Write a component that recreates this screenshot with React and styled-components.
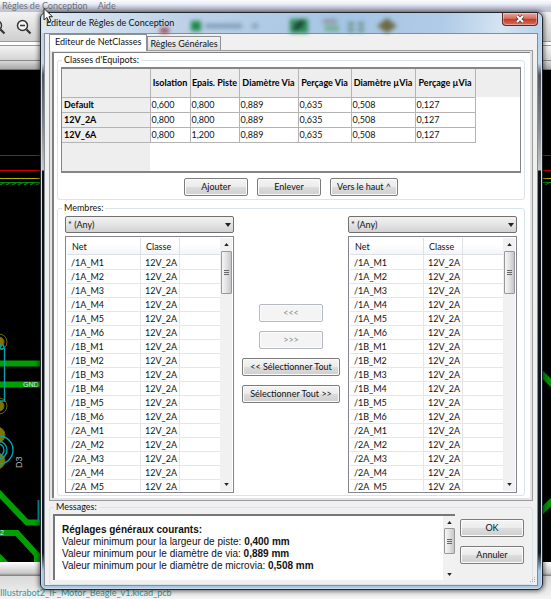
import React from "react";
import styled, { createGlobalStyle, css } from "styled-components";

const UI = `Lato, "Open Sans", sans-serif`;

const GlobalStyle = createGlobalStyle`
  * { box-sizing: border-box; }
  html, body { margin: 0; padding: 0; }
  body { font: 9px/12px ${UI}; color: #111; background: #000; }
  button, select { font: inherit; color: inherit; margin: 0; }
`;

/* ---------- application behind the dialog ---------- */

const Desktop = styled.div`
  position: relative;
  height: 100vh;
  min-height: 480px;
  display: flex;
  flex-direction: column;
  overflow: hidden;
`;

const MenuBar = styled.nav`
  flex: 0 0 12px;
  display: flex;
  gap: 10px;
  padding: 0 2px;
  line-height: 11px;
  color: #6d6f78;
  background: linear-gradient(#fafbfe 0, #eceff7 30%, #c9cde0 60%, #bfc2cc 100%);
`;

const MenuItem = styled.a`
  color: inherit;
  text-decoration: none;
`;

const ToolBar = styled.div`
  flex: 0 0 30px;
  display: flex;
  align-items: center;
  gap: 8px;
  background: linear-gradient(#f2f2f2, #cfcfcf);
  border-bottom: 1px solid #999;

  svg:first-child { margin-left: -11px; }
`;

const RulerBand = styled.div`
  flex: 0 0 28px;
  background: linear-gradient(#fff 0 3px, #999 3px 4px, #f4f4f4 4px, #d4d4d4 18px, #888 18px 19px, #d9d9d9 19px, #a8a8a8 27px, #444 28px);
`;

const Board = styled.div`
  flex: 1;
  min-height: 0;
  display: flex;
  justify-content: space-between;
  background: #000;
  overflow: hidden;

  svg { flex: none; }
`;

const StatusBand = styled.div`
  flex: 0 0 14px;
  background: linear-gradient(#fff, #c8c8c8 80%, #777);
`;

const StatusBar = styled.div`
  flex: 0 0 19px;
  padding-top: 11px;
  color: #2a9aa0;
  background: linear-gradient(#d8d8d8, #f4f4f4);
`;

const Zoom = () => (
  <svg width="18" height="18" viewBox="0 0 18 18" fill="none" stroke="#333" strokeWidth="1.5">
    <circle cx="7.5" cy="7.5" r="5" fill="#f4f4f4" />
    <path d="M5 7.5h5" />
    <path d="M11.5 11.5l4 4" strokeWidth="2.2" />
  </svg>
);

const TracksLeft = () => (
  <svg width="44" height="496" viewBox="0 0 44 496">
    <g strokeWidth="1.2">
      <path d="M0 85.5H44M0 100.5H44" stroke="#d00000" />
      <path d="M0 108.5H44" stroke="#b5b000" />
      <path d="M0 112.5H44" stroke="#0a8a0a" />
      <path d="M0 115l4-2m2 2l4-2m2 2l4-2m2 2l4-2m2 2l4-2m2 2l4-2m2 2l4-2" stroke="#0a8a0a" />
    </g>
    <g fill="none" stroke="#00a000" strokeWidth="6">
      <path d="M0 293.5H44M0 314.5H44" />
      <path d="M-4 420L27 452.5H44M0 463H17L37 485V500M-4 484L12 500" />
    </g>
    <g fill="#7c7608" stroke="#6c6608">
      <circle cx="-1" cy="272" r="5" /><circle cx="-1" cy="272" r="8" fill="none" />
      <circle cx="-1" cy="336" r="5" /><circle cx="-1" cy="336" r="8" fill="none" />
      <circle cx="-3" cy="365" r="8" /><circle cx="-3" cy="391" r="8" />
    </g>
    <g fill="none" stroke="#0b9fac" strokeWidth="1.4">
      <circle cx="2" cy="277" r="2" />
      <path d="M4.5 278V331H0" />
      <circle cx="-1" cy="380" r="14" /><circle cx="-2" cy="380" r="9" /><circle cx="-2" cy="380" r="6" />
      <path d="M38.5 430V452" strokeWidth="2" />
    </g>
    <g fill="#e4e4e4" fontFamily="Liberation Sans, sans-serif" fontSize="7">
      <text x="23" y="317">GND</text>
      <text x="0" y="465">2</text>
      <text fontSize="9" fill="#b8b8b8" transform="translate(22 398) rotate(-90)">D3</text>
    </g>
  </svg>
);

const TracksRight = () => (
  <svg width="12" height="496" viewBox="0 0 12 496">
    <path d="M0 85.5H12M0 100.5H12" stroke="#c00000" />
    <path d="M0 108.5H12" stroke="#b5b000" />
    <path d="M0 112.5H12M0 115l4-2m2 2l4-2" stroke="#0a8a0a" />
    <path d="M-2 299L16 317M-2 446L16 428" stroke="#009000" strokeWidth="6" />
  </svg>
);

/* ---------- dialog shell ---------- */

const Dialog = styled.section`
  position: absolute;
  inset: 12px 8px 9px 40px;
  display: flex;
  flex-direction: column;
  padding: 0 4px 3px 3px;
  border: 1px solid #20262c;
  border-radius: 6px;
  box-shadow: inset 0 0 0 1px #cfdcea, 0 0 5px 1px rgba(0, 0, 0, 0.6);
  background: linear-gradient(#b4cde6 0, #bfd6ec 50px, #50565c 62px, #7f8589 110px, #c9c6c6 157px, #0c1014 158px, #101a20 calc(100% - 36px), #a9c8e8 calc(100% - 18px));
`;

const TitleBar = styled.header`
  flex: 0 0 20px;
  position: relative;
  display: flex;
  justify-content: space-between;
  margin: 0 -3px 0 -2px;
  padding-left: 4px;
  border-radius: 5px 5px 0 0;
  background: linear-gradient(100deg, #dde8f2 0, #bdd2e7 28%, #a5c5e5 60%, #afcbe6 80%, #d5e4f2 92%, #b9d2ea 100%);
`;

const GlassGhosts = styled.svg`
  position: absolute;
  left: 118px;
  top: 4px;
  filter: blur(2px);
`;

const Title = styled.h1`
  position: relative;
  margin: 0;
  font: inherit;
  line-height: 20px;
  white-space: nowrap;
`;

const CloseButton = styled.button`
  flex: 0 0 36px;
  height: 13px;
  margin-right: 3px;
  padding: 0;
  display: grid;
  place-items: center;
  border: 1px solid #5f2a26;
  border-top: 0;
  border-radius: 0 0 4px 4px;
  background: linear-gradient(#e6a79c 0, #d5705f 45%, #c03a26 50%, #d8705a 100%);
  box-shadow: inset 0 0 0 1px rgba(255, 255, 255, 0.35);
`;

const Client = styled.div`
  flex: 1;
  min-height: 0;
  display: flex;
  flex-direction: column;
  padding: 0 4px;
  border: 1px solid #878d93;
  background: #f0f0f0;
`;

const TabStrip = styled.div`
  flex: none;
  display: flex;
  align-items: flex-end;
`;

const Tab = styled.button`
  position: relative;
  height: 14px;
  padding: 0 2px;
  line-height: 12px;
  white-space: nowrap;
  border: 1px solid #8e9094;
  border-bottom: 0;
  background: linear-gradient(#f3f3f3, #dcdcdc);
  ${(p) => p.$active && css`
    height: 17px;
    margin-bottom: -1px;
    padding: 0 5px 2px;
    line-height: 14px;
    background: #fff;
    z-index: 1;
  `}
`;

const TabPanel = styled.div`
  flex: 1;
  min-height: 0;
  display: flex;
  padding: 1px 2px 2px;
  border: 1px solid #9a9ca0;
  background: #e4e4e6;
`;

const Page = styled.div`
  flex: 1;
  min-width: 0;
  display: flex;
  flex-direction: column;
  gap: 2px;
  padding: 1px 5px 2px 3px;
  border: solid #808080;
  border-width: 1px 0 0 2px;
  background: #fff;
`;

/* ---------- groups and controls ---------- */

const Group = styled.fieldset`
  min-width: 0;
  margin: 0;
  padding: 0;
  border: 1px solid #d9e3ea;
  border-radius: 3px;
  flex: ${(p) => (p.$fill ? "1" : "none")};
  min-height: 0;
  display: flex;
  flex-direction: column;

  > legend {
    margin-left: 4px;
    padding: 0 2px;
    line-height: 12px;
  }
`;

const PushButton = styled.button`
  height: 18px;
  min-width: ${(p) => p.$width || 64}px;
  padding: 0 5px;
  line-height: 14px;
  white-space: nowrap;
  border: 1px solid #7c7c7c;
  border-radius: 2px;
  background: linear-gradient(#f4f4f4 0, #ececec 48%, #dcdcdc 52%, #cfcfcf 100%);
  box-shadow: inset 0 0 0 1px #fbfbfb;

  &:disabled {
    color: #8a8a8a;
    border-color: #b4bac0;
    background: #f4f4f4;
  }
`;

const ButtonRow = styled.div`
  display: flex;
  justify-content: center;
  gap: 9px;
  padding: 5px 0 3px;
`;

const GridBox = styled.div`
  height: 106px;
  margin: 1px 3px 0;
  border: solid #858585;
  border-width: 2px 1px 2px 1px;
  background:
    linear-gradient(#eee, #eee) 0 0 / 88px 100% no-repeat,
    linear-gradient(#eee, #eee) 0 0 / 100% 28px no-repeat,
    #fff;
`;

const RuleTable = styled.table`
  border-collapse: collapse;
  table-layout: fixed;
  width: 413px;

  th, td {
    padding: 0 1px;
    height: 15px;
    line-height: 12px;
    text-align: left;
    white-space: nowrap;
    border: solid #b4b4b4;
    border-width: 0 1px 1px 0;
  }
  th { color: #000; font-weight: 700; background: #eee; }
  td { background: #fff; }
  thead th { height: 28px; text-align: center; }
  tbody th { padding-left: 2px; }
`;

const Transfer = styled.div`
  flex: 1;
  min-height: 0;
  display: grid;
  grid-template-columns: 1fr 98px 1fr;
  grid-template-rows: minmax(0, 1fr);
  column-gap: 8px;
  padding: 2px 7px 2px;
`;

const Side = styled.div`
  display: flex;
  flex-direction: column;
  gap: 3px;
  min-height: 0;
  min-width: 0;
`;

const Mover = styled.div`
  display: flex;
  flex-direction: column;
  align-items: center;
  justify-content: flex-start;
  gap: 9px;
  padding-top: 88px;
`;

const ComboWrap = styled.div`
  flex: none;
  display: grid;
  align-items: center;

  > * { grid-area: 1 / 1; }
  svg { justify-self: end; margin-right: 3px; pointer-events: none; }
`;

const Combo = styled.select`
  appearance: none;
  width: 100%;
  height: 17px;
  padding: 0 2px;
  border: 1px solid #707070;
  border-radius: 2px;
  background: linear-gradient(#f2f2f2, #e4e4e4 50%, #d2d2d2);
`;

const ListBox = styled.div`
  flex: 1;
  min-height: 0;
  display: flex;
  padding: 1px;
  border: 1px solid #82868c;
  background: #fff;
`;

const ListView = styled.div`
  flex: 1;
  min-width: 0;
  overflow: hidden;
`;

const NetTable = styled.table`
  width: 100%;
  border-collapse: separate;
  border-spacing: 0;
  table-layout: fixed;

  th, td {
    height: 14px;
    padding: 0 4px;
    line-height: 13px;
    font-weight: 400;
    text-align: left;
    white-space: nowrap;
    border: solid #e6e6e6;
    border-width: 0 1px 1px 0;
  }
  th {
    height: 17px;
    padding: 0 5px;
    border-color: #dde1e6;
    background: linear-gradient(#fff 40%, #f3f5f8);
  }
  td:last-child, th:last-child { border-right: 0; }
  tbody tr:first-child td { height: 15px; padding-top: 1px; }
`;

const Track = styled.div`
  flex: 0 0 12px;
  display: flex;
  flex-direction: column;
  align-items: center;
  background: #f1f1f1;
`;

const Arrow = styled.button`
  flex: 0 0 ${(p) => p.$size || 13}px;
  width: 100%;
  padding: 0;
  border: 0;
  background: none;
  display: grid;
  place-items: center;
`;

const Thumb = styled.div`
  flex: 0 0 ${(p) => p.$length}px;
  width: 11px;
  display: grid;
  place-items: center;
  border: 1px solid #989898;
  border-radius: 1px;
  background: linear-gradient(90deg, #f6f6f6, #e2e2e4 50%, #c6c6ca);
`;

const Spacer = styled.div`
  flex: 1;
`;

/* ---------- message area ---------- */

const Footer = styled.div`
  flex: none;
  display: flex;
  gap: 5px;
  align-items: flex-start;
  margin: 1px 8px 4px 3px;
`;

const MessageBox = styled.div`
  flex: 1;
  min-width: 0;
  height: 66px;
  display: flex;
  border: solid #777;
  border-width: 2px 0 0 2px;
  background: #fff;
`;

const MessageText = styled.div`
  flex: 1;
  min-width: 0;
  padding: 8px 7px 0;
  font: 10px/12px "Liberation Sans", Arial, sans-serif;
  white-space: nowrap;
  overflow: hidden;
`;

const Choices = styled.div`
  display: flex;
  flex-direction: column;
  gap: 9px;
  padding-top: 5px;
`;

const Grip = styled.svg`
  position: absolute;
  right: 6px;
  bottom: 6px;
`;

const Pointer = styled.svg`
  position: absolute;
  left: 43px;
  top: 8px;
`;

const Triangle = ({ up, wide }) => (
  <svg width={wide ? 6 : 5} height={wide ? 4 : 3} viewBox="0 0 6 4">
    <path d={up ? "M0 4L3 0L6 4Z" : "M0 0H6L3 4Z"} fill="#222" />
  </svg>
);

const ScrollBar = ({ thumb, size }) => (
  <Track>
    <Arrow type="button" aria-label="Défiler vers le haut" $size={size}><Triangle up /></Arrow>
    <Thumb $length={thumb}>
      <svg width="5" height="7" viewBox="0 0 5 7"><path d="M0 1.5H5M0 3.5H5M0 5.5H5" stroke="#666" strokeWidth="1" /></svg>
    </Thumb>
    <Spacer />
    <Arrow type="button" aria-label="Défiler vers le bas" $size={size}><Triangle /></Arrow>
  </Track>
);

const columns = ["Isolation", "Epais. Piste", "Diamètre Via", "Perçage Via", "Diamètre µVia", "Perçage µVia"];
const widths = [40, 49, 59, 53, 64, 60];
const classes = [
  ["Default", "0,600", "0,800", "0,889", "0,635", "0,508", "0,127"],
  ["12V_2A", "0,800", "0,800", "0,889", "0,635", "0,508", "0,127"],
  ["12V_6A", "0,800", "1,200", "0,889", "0,635", "0,508", "0,127"],
];
const nets = [["1A", 6], ["1B", 6], ["2A", 5]].flatMap(([group, count]) =>
  Array.from({ length: count }, (_, i) => `/${group}_M${i + 1}`)
);
const settings = [
  ["la largeur de piste", "0,400 mm"],
  ["le diamètre de via", "0,889 mm"],
  ["le diamètre de microvia", "0,508 mm"],
];

const NetPicker = ({ label }) => (
  <Side>
    <ComboWrap>
      <Combo aria-label={`Filtre ${label}`}><option>* (Any)</option></Combo>
      <Triangle wide />
    </ComboWrap>
    <ListBox>
      <ListView>
        <NetTable aria-label={`Nets ${label}`}>
          <colgroup><col width="74" /><col width="39" /><col /></colgroup>
          <thead><tr><th>Net</th><th>Classe</th><th /></tr></thead>
          <tbody>
            {nets.map((n) => <tr key={n}><td>{n}</td><td>12V_2A</td><td /></tr>)}
          </tbody>
        </NetTable>
      </ListView>
      <ScrollBar thumb={43} />
    </ListBox>
  </Side>
);

export default function App() {
  return (
    <Desktop>
      <GlobalStyle />
      <MenuBar>
        <MenuItem href="#regles">Règles de Conception</MenuItem>
        <MenuItem href="#aide">Aide</MenuItem>
      </MenuBar>
      <ToolBar><Zoom /><Zoom /></ToolBar>
      <RulerBand />
      <Board><TracksLeft /><TracksRight /></Board>
      <StatusBand />
      <StatusBar>Illustrabot2_IF_Motor_Beagle_v1.kicad_pcb</StatusBar>

      <Dialog role="dialog" aria-labelledby="dialog-title">
        <TitleBar>
          <GlassGhosts width="290" height="16" viewBox="0 0 290 16" aria-hidden="true">
            <rect x="0" y="11" width="9" height="5" fill="#9a4450" />
            <rect x="31" y="4" width="10" height="10" fill="#1e8a4c" />
            <path d="M45 9H82M92 9H98" stroke="#7796b4" strokeWidth="4" />
            <rect x="130" y="2" width="18" height="14" fill="#2b8a55" />
            <path d="M135 12L143 4" stroke="#1c3328" strokeWidth="4" />
            <rect x="163" y="2" width="14" height="5" fill="#8f9ba6" /><rect x="165" y="9" width="14" height="5" fill="#6fae8a" />
            <path d="M188 7H204M188 13H204" stroke="#6d9187" strokeWidth="4" strokeDasharray="6 4" />
            <path d="M227 1L237 9L227 16L217 9Z" fill="#6d6a45" />
          </GlassGhosts>
          <Title id="dialog-title">Editeur de Règles de Conception</Title>
          <CloseButton type="button" aria-label="Fermer">
            <svg width="10" height="8" viewBox="0 0 10 8">
              <path d="M2 1L8 7M8 1L2 7" stroke="#4c3a3a" strokeWidth="3.4" />
              <path d="M2 1L8 7M8 1L2 7" stroke="#fff" strokeWidth="2" />
            </svg>
          </CloseButton>
        </TitleBar>

        <Client>
          <TabStrip role="tablist">
            <Tab type="button" role="tab" aria-selected="true" $active>Editeur de NetClasses</Tab>
            <Tab type="button" role="tab" aria-selected="false">Règles Générales</Tab>
          </TabStrip>
          <TabPanel role="tabpanel">
            <Page>
              <Group>
                <legend>Classes d'Equipots:</legend>
                <GridBox>
                  <RuleTable>
                    <colgroup>
                      <col width="88" />
                      {widths.map((w, i) => <col key={i} width={w} />)}
                    </colgroup>
                    <thead>
                      <tr><th />{columns.map((c) => <th key={c} scope="col">{c}</th>)}</tr>
                    </thead>
                    <tbody>
                      {classes.map(([name, ...values]) => (
                        <tr key={name}>
                          <th scope="row">{name}</th>
                          {values.map((v, i) => <td key={i}>{v}</td>)}
                        </tr>
                      ))}
                    </tbody>
                  </RuleTable>
                </GridBox>
                <ButtonRow>
                  <PushButton type="button">Ajouter</PushButton>
                  <PushButton type="button">Enlever</PushButton>
                  <PushButton type="button" $width={68}>Vers le haut ^</PushButton>
                </ButtonRow>
              </Group>

              <Group $fill>
                <legend>Membres:</legend>
                <Transfer>
                  <NetPicker label="de gauche" />
                  <Mover>
                    <PushButton type="button" disabled>&lt;&lt;&lt;</PushButton>
                    <PushButton type="button" disabled>&gt;&gt;&gt;</PushButton>
                    <PushButton type="button" $width={98}>&lt;&lt; Sélectionner Tout</PushButton>
                    <PushButton type="button" $width={98}>Sélectionner Tout &gt;&gt;</PushButton>
                  </Mover>
                  <NetPicker label="de droite" />
                </Transfer>
              </Group>
            </Page>
          </TabPanel>

          <Group>
            <legend>Messages:</legend>
            <Footer>
              <MessageBox>
                <MessageText>
                  <div><b>Réglages généraux courants:</b></div>
                  {settings.map(([what, value]) => (
                    <div key={what}>Valeur minimum pour {what}: <b>{value}</b></div>
                  ))}
                </MessageText>
                <ScrollBar thumb={26} size={12} />
              </MessageBox>
              <Choices>
                <PushButton type="button">OK</PushButton>
                <PushButton type="button">Annuler</PushButton>
              </Choices>
            </Footer>
          </Group>
        </Client>
        <Grip width="6" height="6" viewBox="0 0 6 6" fill="#b0b0b0" aria-hidden="true">
          <path d="M4 0h1v1h-1zM2 2h1v1h-1zM4 2h1v1h-1zM0 4h1v1h-1zM2 4h1v1h-1zM4 4h1v1h-1z" />
        </Grip>
      </Dialog>

      <Pointer width="11" height="16" viewBox="0 0 11 16" aria-hidden="true">
        <path d="M1 0.5V12L4 9.5L6 14L8 13L6 8.7H9.5Z" fill="#fff" stroke="#222" strokeWidth="1" />
      </Pointer>
    </Desktop>
  );
}
